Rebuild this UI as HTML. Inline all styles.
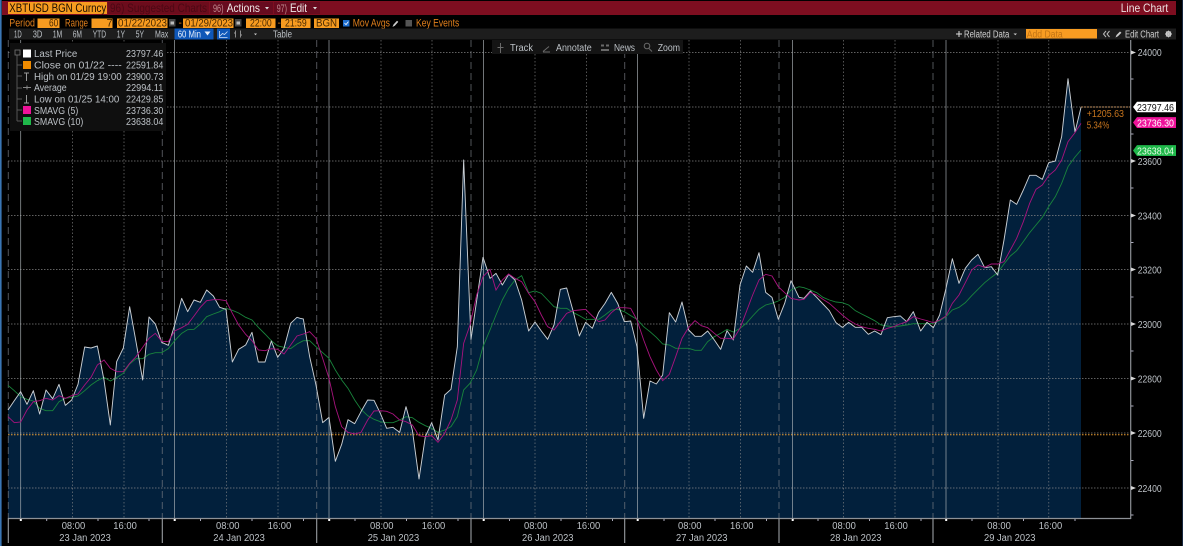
<!DOCTYPE html>
<html><head><meta charset="utf-8"><style>
html,body{margin:0;padding:0;background:#000;width:1183px;height:546px;overflow:hidden}
svg{display:block;position:absolute;left:0;top:0;filter:blur(.3px)}
text{font-family:"Liberation Sans",sans-serif;font-size:10px;fill:#bcc1c6}
.o{fill:#e07f1c}.t{fill:#b4bac1;font-size:10px}.ax{fill:#c8c8c8;font-size:10px}
.d{fill:#4a2a00}
.w{fill:none;stroke:#cbd0d5;stroke-width:2.8;stroke-linejoin:round}
.m{fill:none;stroke:#a8137e;stroke-width:2.7}
.g{fill:none;stroke:#19843c;stroke-width:2.7}
.a{fill:#02203c;stroke:none}
</style></head><body>
<svg width="1183" height="546" viewBox="0 0 1183 546" xmlns="http://www.w3.org/2000/svg">
<rect width="1183" height="546" fill="#000"/>
<rect x="0" y="0" width="1.6" height="546" fill="#3a76b4"/>
<rect x="1182" y="0" width="1" height="546" fill="#16263e"/>

<!-- area -->
<g class="a">
<polygon transform="translate(0 270) scale(.33333)" points="24,744 24,420 43,392 62,365 81,403 100,362 119,432 138,360 158,386 177,343 196,406 215,390 234,343 254,231 273,234 292,228 312,330 331,465 350,275 370,234 389,110 408,215 428,330 447,141 466,162 485,217 505,226 524,165 545,85 563,125 582,90 601,97 620,60 640,78 659,112 678,118 697,276 716,238 737,225 756,187 775,276 795,276 814,213 833,262 852,235 872,160 891,142 900,145 900,744"/>
<polygon transform="translate(300 250) scale(.33333)" points="0,804 0,205 10,207 29,320 48,405 68,518 87,502 106,634 125,583 144,509 164,521 183,485 203,450 222,451 241,490 260,535 279,532 299,547 318,470 337,540 357,687 376,560 395,518 414,570 434,435 453,418 472,290 491,-270 513,268 549,22 570,85 588,70 607,105 626,73 645,90 665,150 686,243 705,216 724,243 743,268 762,225 781,118 800,114 819,182 838,258 857,217 877,235 896,187 915,160 915,804"/>
<polygon transform="translate(600 240) scale(.33333)" points="-4,834 -4,217 15,190 34,157 53,190 73,245 92,243 111,320 131,535 150,423 169,432 188,405 208,218 227,246 246,186 266,270 285,289 304,289 323,273 343,300 362,328 381,272 400,300 420,135 439,78 458,97 477,38 497,157 516,172 535,238 554,190 573,122 597,172 612,175 631,153 650,172 669,192 688,212 708,248 727,262 746,247 766,262 785,262 805,283 824,273 843,284 862,233 881,230 900,228 900,834"/>
<polygon transform="translate(900 160) scale(.33333)" points="0,1074 0,467 20,485 40,455 62,513 81,487 100,503 119,465 138,385 157,296 177,370 196,325 215,300 234,283 254,323 274,320 293,345 312,240 331,120 350,133 370,90 389,46 408,46 427,58 446,8 466,3 485,-70 504,-244 525,-84 543,-158 543,1074"/>
</g>

<!-- horizontal grid -->
<g stroke="#8a8a8a" stroke-width="1" stroke-dasharray="1.5 1.5" fill="none" opacity=".7">
<path d="M8 52.5H1131M8 107H1131M8 161H1131M8 215.5H1131M8 269.5H1131M8 324H1131M8 378.5H1131M8 433H1131M8 488H1131"/>
</g>
<path d="M8 434.8H1131" stroke="#f0a030" stroke-width="1" stroke-dasharray="1.5 1.5"/>
<path d="M1081 107H1131" stroke="#c09060" stroke-width="1" stroke-dasharray="2 1"/>

<!-- vertical grid: dotted -->
<g stroke="#8a8a8a" stroke-width="1" stroke-dasharray="1.5 2" fill="none" opacity=".6">
<path d="M72.5 40V518M124 40V518M226.5 40V518M278 40V518M381 40V518M432 40V518M535 40V518M586.5 40V518M689 40V518M740.5 40V518M843.5 40V518M895 40V518M998 40V518M1048.7 40V518"/>
</g>
<!-- dashed -->
<g stroke="#7c8086" stroke-width="1" stroke-dasharray="7 4" fill="none" opacity=".65">
<path d="M8.3 40V518M162.3 40V518M316.7 40V518M471 40V518M624.7 40V518M779 40V518M933 40V518"/>
</g>
<!-- solid -->
<g stroke="#aeb3b8" stroke-width="1" fill="none" opacity=".65">
<path d="M20.6 40V518M174.5 40V518M329 40V518M483.5 40V518M637.5 40V518M792.5 40V518M946 40V518"/>
</g>

<!-- series lines -->
<g class="g">
<polyline transform="translate(0 270) scale(.33333)" points="24,346 43,362 62,380 81,388 100,393 119,415 138,422 158,422 177,395 196,385 215,382 234,378 254,362 273,345 292,332 312,322 331,333 350,323 370,310 389,282 408,266 428,266 447,253 466,248 485,248 505,236 524,212 545,190 563,179 582,178 601,162 620,140 640,132 659,125 678,115 697,121 716,129 737,142 756,150 775,172 795,192 814,212 833,228 852,232 872,236 891,222 910,212"/>
<polyline transform="translate(300 250) scale(.33333)" points="10,272 29,272 48,290 68,308 87,325 106,360 125,390 144,415 164,450 183,478 203,497 222,508 241,515 260,518 279,518 299,510 318,500 337,503 357,517 376,527 395,535 414,547 434,540 453,530 472,500 491,420 510,400 530,360 549,290 570,240 588,195 607,150 626,115 645,90 665,77 686,128 705,123 724,130 743,150 762,170 781,175 800,175 819,187 838,197 857,208 877,208 896,208"/>
<polyline transform="translate(600 240) scale(.33333)" points="-4,238 15,225 34,210 53,208 73,215 92,227 111,238 131,260 150,275 169,292 188,312 208,315 227,325 246,325 266,325 285,331 304,331 323,305 343,290 362,280 381,268 400,276 420,265 439,250 458,228 477,208 497,195 516,190 535,183 554,172 573,150 597,140 612,143 631,150 650,158 669,172 688,180 708,186 727,188 746,195 766,212 785,222 805,232 824,242 843,255 862,258 881,260 900,258"/>
<polyline transform="translate(900 160) scale(.33333)" points="0,498 20,495 40,491 62,491 81,491 100,490 119,482 138,470 157,450 177,442 196,428 215,407 234,388 254,368 274,352 293,338 312,312 331,288 350,272 370,245 389,218 408,195 427,172 446,140 466,110 485,70 504,20 525,-9 543,-30"/>
</g>
<g class="w">
<polyline transform="translate(0 270) scale(.33333)" points="24,420 43,392 62,365 81,403 100,362 119,432 138,360 158,386 177,343 196,406 215,390 234,343 254,231 273,234 292,228 312,330 331,465 350,275 370,234 389,110 408,215 428,330 447,141 466,162 485,217 505,226 524,165 545,85 563,125 582,90 601,97 620,60 640,78 659,112 678,118 697,276 716,238 737,225 756,187 775,276 795,276 814,213 833,262 852,235 872,160 891,142 900,145"/>
<polyline transform="translate(300 250) scale(.33333)" points="0,205 10,207 29,320 48,405 68,518 87,502 106,634 125,583 144,509 164,521 183,485 203,450 222,451 241,490 260,535 279,532 299,547 318,470 337,540 357,687 376,560 395,518 414,570 434,435 453,418 472,290 491,-270 513,268 549,22 570,85 588,70 607,105 626,73 645,90 665,150 686,243 705,216 724,243 743,268 762,225 781,118 800,114 819,182 838,258 857,217 877,235 896,187"/>
<polyline transform="translate(600 240) scale(.33333)" points="-4,217 15,190 34,157 53,190 73,245 92,243 111,320 131,535 150,423 169,432 188,405 208,218 227,246 246,186 266,270 285,289 304,289 323,273 343,300 362,328 381,272 400,300 420,135 439,78 458,97 477,38 497,157 516,172 535,238 554,190 573,122 597,172 612,175 631,153 650,172 669,192 688,212 708,248 727,262 746,247 766,262 785,262 805,283 824,273 843,284 862,233 881,230 900,228"/>
<polyline transform="translate(900 160) scale(.33333)" points="0,467 20,485 40,455 62,513 81,487 100,503 119,465 138,385 157,296 177,370 196,325 215,300 234,283 254,323 274,320 293,345 312,240 331,120 350,133 370,90 389,46 408,46 427,58 446,8 466,3 485,-70 504,-244 525,-84 543,-158"/>
</g>
<g class="m">
<polyline transform="translate(0 270) scale(.33333)" points="24,440 43,458 62,456 81,420 100,395 119,392 138,385 158,390 177,377 196,385 215,377 234,372 254,345 273,322 292,285 312,270 331,295 350,305 370,305 389,280 408,260 428,232 447,205 466,190 485,214 505,215 524,183 545,173 563,163 582,138 601,112 620,92 640,89 659,89 678,92 697,130 716,165 737,193 756,212 775,240 795,242 814,236 833,238 852,252 872,225 891,198 910,192"/>
<polyline transform="translate(300 250) scale(.33333)" points="10,252 29,245 48,265 68,325 87,385 106,470 125,530 144,547 164,552 183,547 203,510 222,483 241,482 260,484 279,492 299,510 318,515 337,525 357,557 376,560 395,557 414,577 434,550 453,510 472,450 491,280 510,225 530,135 549,80 570,58 588,120 607,90 626,72 645,85 665,95 686,130 705,155 724,195 743,230 762,240 781,215 800,190 819,182 838,180 857,178 877,198 896,215"/>
<polyline transform="translate(600 240) scale(.33333)" points="-4,245 15,240 34,218 53,203 73,203 92,205 111,240 131,300 150,350 169,390 188,422 208,403 227,350 246,295 266,262 285,242 304,257 323,263 343,280 362,295 381,295 400,297 420,265 439,215 458,165 477,120 497,103 516,108 535,140 554,158 573,175 597,180 612,178 631,157 650,165 669,178 688,190 708,208 727,225 746,240 766,252 785,260 805,265 824,268 843,273 862,265 881,260 900,252"/>
<polyline transform="translate(900 160) scale(.33333)" points="0,492 20,485 40,470 62,477 81,482 100,488 119,480 138,468 157,430 177,405 196,368 215,330 234,315 254,322 274,312 293,312 312,305 331,270 350,235 370,185 389,130 408,88 427,75 446,47 466,30 485,0 504,-55 525,-82 543,-110"/>
</g>

<!-- axes -->
<path d="M8 518.5H1131M1130.7 40V519" stroke="#8d9196" stroke-width="1.2" fill="none"/>
<g stroke="#aab" stroke-width="1" fill="none">
<path d="M46.7 519v2M98 519v2M149 519v2M200.5 519v2M252 519v2M303.5 519v2M355 519v2M406.5 519v2M458 519v2M509.5 519v2M561 519v2M612.5 519v2M664 519v2M715 519v2M766.5 519v2M818 519v2M869.5 519v2M921 519v2M972 519v2M1023.5 519v2M1075 519v2"/>
<path d="M1131 79h2.5M1131 134h2.5M1131 188h2.5M1131 242.5h2.5M1131 297h2.5M1131 351h2.5M1131 406h2.5M1131 460.5h2.5M1131 515h2.5"/>
</g>
<g fill="#fff">
<rect x="19.8" y="519" width="2" height="2"/><rect x="173.7" y="519" width="2" height="2"/><rect x="328.2" y="519" width="2" height="2"/><rect x="482.7" y="519" width="2" height="2"/><rect x="636.7" y="519" width="2" height="2"/><rect x="791.7" y="519" width="2" height="2"/><rect x="945.2" y="519" width="2" height="2"/>
</g>
<g stroke="#9a9ea2" stroke-width="1.1">
<path d="M8.3 518V543M162.3 518V543M316.7 518V543M471 518V543M624.7 518V543M779 518V543M933 518V543"/>
</g>
<g fill="#d8d8d8">
<path d="M1131 50.5l5 2-5 2zM1131 159l5 2-5 2zM1131 213.5l5 2-5 2zM1131 267.5l5 2-5 2zM1131 322l5 2-5 2zM1131 376.5l5 2-5 2zM1131 431l5 2-5 2zM1131 486l5 2-5 2z"/>
</g>
<g class="ax">
<text x="1137.7" y="56" textLength="24" lengthAdjust="spacingAndGlyphs">24000</text>
<text x="1137.7" y="165" textLength="24" lengthAdjust="spacingAndGlyphs">23600</text>
<text x="1137.7" y="219.5" textLength="24" lengthAdjust="spacingAndGlyphs">23400</text>
<text x="1137.7" y="273.5" textLength="24" lengthAdjust="spacingAndGlyphs">23200</text>
<text x="1137.7" y="328" textLength="24" lengthAdjust="spacingAndGlyphs">23000</text>
<text x="1137.7" y="382.5" textLength="24" lengthAdjust="spacingAndGlyphs">22800</text>
<text x="1137.7" y="437" textLength="24" lengthAdjust="spacingAndGlyphs">22600</text>
<text x="1137.7" y="492" textLength="24" lengthAdjust="spacingAndGlyphs">22400</text>
</g>

<!-- price flags -->
<path d="M1133 107l4-5.2H1176V112.2H1137z" fill="#fff"/>
<text x="1137" y="110.8" style="fill:#111" textLength="37" lengthAdjust="spacingAndGlyphs">23797.46</text>
<path d="M1133 122.5l4-5.4H1176V128H1137z" fill="#ee1299"/>
<text x="1137" y="126.5" style="fill:#fff" textLength="37" lengthAdjust="spacingAndGlyphs">23736.30</text>
<path d="M1133 150.5l4-5.4H1176V156H1137z" fill="#1fb84a"/>
<text x="1137" y="154.5" style="fill:#e8ffe8" textLength="37" lengthAdjust="spacingAndGlyphs">23638.04</text>
<text x="1086.7" y="117" style="fill:#c9761e" textLength="37.3" lengthAdjust="spacingAndGlyphs">+1205.63</text>
<text x="1086.7" y="128.5" style="fill:#c9761e" textLength="22.6" lengthAdjust="spacingAndGlyphs">5.34%</text>

<!-- x labels -->
<g class="t">
<text x="61.7" y="529" textLength="23.5" lengthAdjust="spacingAndGlyphs">08:00</text><text x="113.3" y="529" textLength="23.5" lengthAdjust="spacingAndGlyphs">16:00</text><text x="59.3" y="541" textLength="51.5" lengthAdjust="spacingAndGlyphs">23 Jan 2023</text>
<text x="216" y="529" textLength="23.5" lengthAdjust="spacingAndGlyphs">08:00</text><text x="267.7" y="529" textLength="23.5" lengthAdjust="spacingAndGlyphs">16:00</text><text x="213.3" y="541" textLength="51.5" lengthAdjust="spacingAndGlyphs">24 Jan 2023</text>
<text x="370" y="529" textLength="23.5" lengthAdjust="spacingAndGlyphs">08:00</text><text x="421.7" y="529" textLength="23.5" lengthAdjust="spacingAndGlyphs">16:00</text><text x="367.7" y="541" textLength="51.5" lengthAdjust="spacingAndGlyphs">25 Jan 2023</text>
<text x="524" y="529" textLength="23.5" lengthAdjust="spacingAndGlyphs">08:00</text><text x="576.7" y="529" textLength="23.5" lengthAdjust="spacingAndGlyphs">16:00</text><text x="522" y="541" textLength="51.5" lengthAdjust="spacingAndGlyphs">26 Jan 2023</text>
<text x="678" y="529" textLength="23.5" lengthAdjust="spacingAndGlyphs">08:00</text><text x="730" y="529" textLength="23.5" lengthAdjust="spacingAndGlyphs">16:00</text><text x="676" y="541" textLength="51.5" lengthAdjust="spacingAndGlyphs">27 Jan 2023</text>
<text x="832.3" y="529" textLength="23.5" lengthAdjust="spacingAndGlyphs">08:00</text><text x="884.3" y="529" textLength="23.5" lengthAdjust="spacingAndGlyphs">16:00</text><text x="830" y="541" textLength="51.5" lengthAdjust="spacingAndGlyphs">28 Jan 2023</text>
<text x="987.3" y="529" textLength="23.5" lengthAdjust="spacingAndGlyphs">08:00</text><text x="1038.7" y="529" textLength="23.5" lengthAdjust="spacingAndGlyphs">16:00</text><text x="984" y="541" textLength="51.5" lengthAdjust="spacingAndGlyphs">29 Jan 2023</text>
</g>

<!-- legend -->
<rect x="10" y="43" width="156" height="88" fill="#0f0f0f"/>
<path d="M17 51V121M17 65H22M17 76H22M17 88H22M17 99H22M17 110H22M17 121H22" stroke="#555" stroke-width="1" fill="none"/>
<rect x="15" y="50" width="5" height="5" fill="#111" stroke="#777" stroke-width=".8"/>
<rect x="23" y="49.5" width="8" height="8" fill="#fff"/>
<rect x="23" y="61" width="8" height="8" fill="#f08c00"/>
<path d="M24 73h5M26.5 73v8" stroke="#999" fill="none"/>
<path d="M23 87.5h8M27 85.5v4" stroke="#888" fill="none"/>
<path d="M24 103h5M26.5 95v8" stroke="#999" fill="none"/>
<rect x="23" y="106" width="8" height="8" fill="#ee1299"/>
<rect x="23" y="117" width="8" height="8" fill="#1fb84a"/>
<g>
<text x="34" y="57" textLength="43.3" lengthAdjust="spacingAndGlyphs">Last Price</text><text x="126" y="57" textLength="37.3" lengthAdjust="spacingAndGlyphs">23797.46</text>
<text x="34" y="68.5" textLength="87.7" lengthAdjust="spacingAndGlyphs">Close on 01/22 ----</text><text x="126" y="68.5" textLength="37.3" lengthAdjust="spacingAndGlyphs">22591.84</text>
<text x="34" y="80" textLength="87.7" lengthAdjust="spacingAndGlyphs">High on 01/29 19:00</text><text x="126" y="80" textLength="37.3" lengthAdjust="spacingAndGlyphs">23900.73</text>
<text x="34" y="91" textLength="32.7" lengthAdjust="spacingAndGlyphs">Average</text><text x="126" y="91" textLength="37.3" lengthAdjust="spacingAndGlyphs">22994.11</text>
<text x="34" y="102.5" textLength="85.3" lengthAdjust="spacingAndGlyphs">Low on 01/25 14:00</text><text x="126" y="102.5" textLength="37.3" lengthAdjust="spacingAndGlyphs">22429.85</text>
<text x="34" y="114" textLength="44.3" lengthAdjust="spacingAndGlyphs">SMAVG (5)</text><text x="126" y="114" textLength="37.3" lengthAdjust="spacingAndGlyphs">23736.30</text>
<text x="34" y="125" textLength="49.3" lengthAdjust="spacingAndGlyphs">SMAVG (10)</text><text x="126" y="125" textLength="37.3" lengthAdjust="spacingAndGlyphs">23638.04</text>
</g>

<!-- top red bar -->
<rect x="2" y="1" width="1174" height="14" fill="#7e0e20"/>
<rect x="8" y="2" width="99" height="12" fill="#f79b20"/>
<text x="9.3" y="12" style="font-size:12px;fill:#1a0d00" textLength="97" lengthAdjust="spacingAndGlyphs">XBTUSD BGN Curncy</text>
<rect x="108" y="2" width="101" height="12" fill="#6c0c1c"/>
<text x="110" y="12" style="font-size:12px;fill:#4c0814" textLength="97" lengthAdjust="spacingAndGlyphs">96) Suggested Charts</text>
<rect x="210" y="2" width="63" height="12" fill="#670b1f"/>
<text x="213" y="12" style="font-size:11px;fill:#c08a90" textLength="10.5" lengthAdjust="spacingAndGlyphs">96)</text>
<text x="226.7" y="12" style="font-size:12px;fill:#f0e8e8" textLength="33.3" lengthAdjust="spacingAndGlyphs">Actions</text>
<path d="M265 7h4l-2 2.5z" fill="#ddd"/>
<rect x="274" y="2" width="46" height="12" fill="#670b1f"/>
<text x="276.7" y="12" style="font-size:11px;fill:#c08a90" textLength="10.3" lengthAdjust="spacingAndGlyphs">97)</text>
<text x="290" y="12" style="font-size:12px;fill:#f0e8e8" textLength="17" lengthAdjust="spacingAndGlyphs">Edit</text>
<path d="M313 7h4l-2 2.5z" fill="#ddd"/>
<text x="1120.7" y="12" style="font-size:12px;fill:#ece0e0" textLength="47.6" lengthAdjust="spacingAndGlyphs">Line Chart</text>

<!-- row 2 -->
<g style="font-size:10px">
<text x="9.3" y="26.5" class="o" textLength="25.7" lengthAdjust="spacingAndGlyphs" style="font-size:11px">Period</text>
<rect x="37.5" y="18.5" width="22" height="9.5" fill="#f79b20"/><text x="49" y="26.5" class="d" textLength="9.3" lengthAdjust="spacingAndGlyphs" style="font-size:11px">60</text>
<text x="65" y="26.5" class="o" textLength="23" lengthAdjust="spacingAndGlyphs" style="font-size:11px">Range</text>
<rect x="91.5" y="18.5" width="21" height="9.5" fill="#f79b20"/><text x="106.5" y="26.5" class="d" style="font-size:11px">7</text>
<rect x="117" y="18.5" width="50.5" height="9.5" fill="#f79b20"/><text x="118" y="26.5" class="d" textLength="49" lengthAdjust="spacingAndGlyphs" style="font-size:11px">01/22/2023</text>
<rect x="169" y="19" width="6.5" height="7.5" fill="#444"/><rect x="170.5" y="21.5" width="3.5" height="3" fill="#bbb"/>
<text x="178.5" y="26" class="o">-</text>
<rect x="183" y="18.5" width="50.5" height="9.5" fill="#f79b20"/><text x="185" y="26.5" class="d" textLength="48" lengthAdjust="spacingAndGlyphs" style="font-size:11px">01/29/2023</text>
<rect x="235" y="19" width="6.5" height="7.5" fill="#444"/><rect x="236.5" y="21.5" width="3.5" height="3" fill="#bbb"/>
<rect x="246" y="18.5" width="29.5" height="9.5" fill="#f79b20"/><text x="250" y="26.5" class="d" textLength="21.7" lengthAdjust="spacingAndGlyphs" style="font-size:11px">22:00</text>
<text x="277.5" y="26" class="o">-</text>
<rect x="281" y="18.5" width="29.5" height="9.5" fill="#f79b20"/><text x="285" y="26.5" class="d" textLength="21.7" lengthAdjust="spacingAndGlyphs" style="font-size:11px">21:59</text>
<rect x="314" y="18.5" width="25" height="9.5" fill="#f79b20"/><text x="316" y="26.5" class="d" textLength="21" lengthAdjust="spacingAndGlyphs" style="font-size:11px">BGN</text>
<rect x="343" y="20" width="6.5" height="6.5" fill="#1f6fd0"/><path d="M344.5 23l1.5 1.6 2.4-3" stroke="#fff" stroke-width=".8" fill="none"/>
<text x="352.7" y="26.5" class="o" textLength="37.3" lengthAdjust="spacingAndGlyphs" style="font-size:11px">Mov Avgs</text>
<path d="M392.5 27l1-2.5 3.5-3.8 1.3 1.2-3.5 3.8z" fill="#ccc"/>
<rect x="405.5" y="20" width="6.5" height="6.5" fill="#555"/>
<text x="416" y="26.5" class="o" textLength="43.3" lengthAdjust="spacingAndGlyphs" style="font-size:11px">Key Events</text>
</g>

<!-- row 3 -->
<rect x="9" y="28.5" width="1167" height="11" fill="#1d1d1d"/>
<g>
<text x="14" y="37.5" textLength="7.7" lengthAdjust="spacingAndGlyphs">1D</text>
<text x="32.7" y="37.5" textLength="9.6" lengthAdjust="spacingAndGlyphs">3D</text>
<text x="52.7" y="37.5" textLength="9.6" lengthAdjust="spacingAndGlyphs">1M</text>
<text x="72.7" y="37.5" textLength="9.3" lengthAdjust="spacingAndGlyphs">6M</text>
<text x="92.7" y="37.5" textLength="13.3" lengthAdjust="spacingAndGlyphs">YTD</text>
<text x="116.7" y="37.5" textLength="8.3" lengthAdjust="spacingAndGlyphs">1Y</text>
<text x="135.7" y="37.5" textLength="8.3" lengthAdjust="spacingAndGlyphs">5Y</text>
<text x="155" y="37.5" textLength="13.3" lengthAdjust="spacingAndGlyphs">Max</text>
<rect x="174.5" y="28.5" width="39" height="11" fill="#0f57b8"/>
<text x="177.7" y="37.5" style="fill:#e6eefa" textLength="23.3" lengthAdjust="spacingAndGlyphs">60 Min</text><path d="M204.5 31.5h6l-3 4z" fill="#e6eefa"/>
<rect x="217" y="28.5" width="13" height="11" fill="#0f57b8"/>
<path d="M219.5 31v6.5h8M220 36l2.5-2.5 2 1 3-3" stroke="#cfe0f8" stroke-width=".8" fill="none"/>
<path d="M235.5 30.5v7M240.5 30.5v7M235.5 33h-1.5M240.5 35h1.5" stroke="#999" stroke-width=".9" fill="none"/>
<path d="M254 33.5h3l-1.5 1.7z" fill="#ccc"/>
<text x="273" y="37.5" textLength="19" lengthAdjust="spacingAndGlyphs">Table</text>
<path d="M956 34h6M959 31v6" stroke="#ddd" stroke-width="1"/>
<text x="964" y="37.5" style="fill:#d0d0d0" textLength="45.3" lengthAdjust="spacingAndGlyphs">Related Data</text>
<path d="M1013.5 33.5h3.5l-1.7 1.8z" fill="#ccc"/>
<rect x="1026" y="29" width="71" height="9.5" fill="#f89c22"/>
<text x="1026.7" y="37.5" style="fill:#c27414" textLength="36" lengthAdjust="spacingAndGlyphs">Add Data</text>
<path d="M1106 31l-2.5 3 2.5 3M1109.5 31l-2.5 3 2.5 3" stroke="#bbb" stroke-width="1" fill="none"/>
<path d="M1115.5 37.5l1-2.5 3.5-3.5 1.4 1.3-3.5 3.5z" fill="#ccc"/>
<text x="1125" y="37.5" style="fill:#d0d0d0" textLength="34" lengthAdjust="spacingAndGlyphs">Edit Chart</text>
<circle cx="1168.5" cy="34" r="2.2" fill="none" stroke="#ccc" stroke-width="1.5"/>
<path d="M1168.5 30.5v7M1165 34h7M1166 31.5l5 5M1171 31.5l-5 5" stroke="#ccc" stroke-width=".7"/>
</g>

<!-- floating toolbar -->
<rect x="492" y="40" width="191" height="14" fill="#141414"/>
<g stroke="#6a6a6a" fill="none" stroke-width="1">
<path d="M500.5 43v10M497.5 47.5h6"/><path d="M543 51.5l6-5M543 52h7"/>
<path d="M601 45.5h3M606 45.5h3M601 50h8" stroke-width="2"/>
<circle cx="647" cy="46" r="2.8"/><path d="M649 48.5l3 3"/>
</g>
<text x="510" y="51" textLength="23" lengthAdjust="spacingAndGlyphs">Track</text>
<text x="556" y="51" textLength="35.7" lengthAdjust="spacingAndGlyphs">Annotate</text>
<text x="614" y="51" textLength="21" lengthAdjust="spacingAndGlyphs">News</text>
<text x="657.7" y="51" textLength="22.3" lengthAdjust="spacingAndGlyphs">Zoom</text>
</svg>
</body></html>
